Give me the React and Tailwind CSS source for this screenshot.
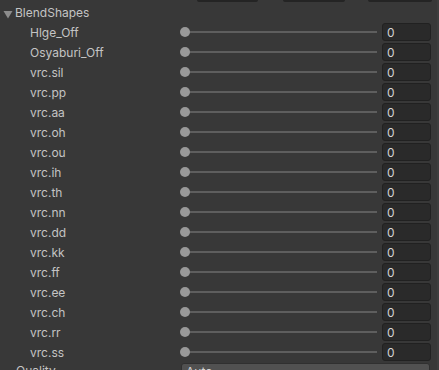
const shapes = [
  'Hlge_Off',
  'Osyaburi_Off',
  'vrc.sil',
  'vrc.pp',
  'vrc.aa',
  'vrc.oh',
  'vrc.ou',
  'vrc.ih',
  'vrc.th',
  'vrc.nn',
  'vrc.dd',
  'vrc.kk',
  'vrc.ff',
  'vrc.ee',
  'vrc.ch',
  'vrc.rr',
  'vrc.ss',
];

function SliderRow({ label }) {
  return (
    <div className="flex h-5 items-center">
      <div className="w-[180px] pl-[30px] pt-[2px] text-[12px] leading-none text-[#c4c4c4]">{label}</div>
      <div className="relative flex h-5 w-[197px] items-center">
        <div className="ml-[5px] h-[2px] flex-1 bg-[#5e5e5e]" />
        {/* knob */}
        <div className="absolute left-0 top-[5px] h-[10px] w-[10px] rounded-full bg-[#999999]" />
      </div>
      <div className="ml-[5px] flex h-[18px] w-[49px] items-center rounded-[3px] border border-[#212121] bg-[#2a2a2a] pl-[4px] pt-[1px] text-[12px] text-[#d2d2d2]">
        0
      </div>
    </div>
  );
}

export default function App() {
  return (
    <div
      className="relative h-[370px] w-[439px] overflow-hidden bg-[#383838]"
      style={{ fontFamily: 'Inter, "Noto Sans", sans-serif' }}
    >
      {/* bottoms of the buttons above */}
      <div className="flex h-[2px]">
        <div className="ml-[197px] w-[61px] rounded-b-[2px] bg-[#242424]" />
        <div className="ml-[25px] w-[62px] rounded-b-[2px] bg-[#242424]" />
        <div className="ml-[23px] w-[64px] rounded-b-[2px] bg-[#242424]" />
      </div>

      {/* foldout header */}
      <div className="flex h-5 items-center">
        <svg width="15" height="20" viewBox="0 0 15 20" className="shrink-0">
          <polygon points="3.5,9 12.5,9 8,16.5" fill="#8c8c8c" />
        </svg>
        <span className="pt-[2px] text-[12px] leading-none text-[#c4c4c4]">BlendShapes</span>
      </div>

      {shapes.map((s) => (
        <SliderRow key={s} label={s} />
      ))}

      {/* next property, cut off */}
      <div className="flex h-5 items-start pt-[1px]">
        <div className="w-[181px] pl-[16px] pt-[2px] text-[12px] leading-none text-[#c4c4c4]">Quality</div>
        <div className="h-[18px] w-[249px] rounded-[3px] border border-[#303030] bg-[#515151] pl-[4px] pt-[2px] text-[12px] leading-none text-[#d2d2d2]">
          Auto
        </div>
      </div>

      {/* right edge */}
      <div className="absolute right-0 top-0 h-full w-[2px] bg-[#3e3e3e]" />
    </div>
  );
}
